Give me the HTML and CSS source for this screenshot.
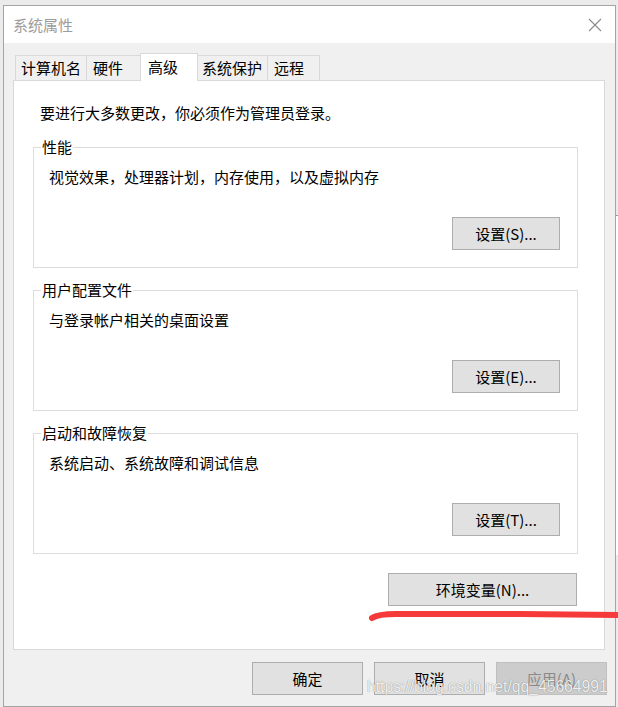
FILE: index.html
```html
<!DOCTYPE html>
<html lang="zh-CN">
<head>
<meta charset="utf-8">
<title>系统属性</title>
<link rel="stylesheet" href="styles.css">
</head>
<body>
<div class="window">
  <div class="titlebar">
    <span class="title">系统属性</span>
    <svg class="close" width="14" height="14" viewBox="0 0 14 14"><path d="M1 1 L13 13 M13 1 L1 13" stroke="#8a8a8a" stroke-width="1.1" fill="none"/></svg>
  </div>
  <div class="tabs">
    <div class="tab tab-w1">计算机名</div>
    <div class="tab tab-w2">硬件</div>
    <div class="tab tab-active">高级</div>
    <div class="tab tab-w4">系统保护</div>
    <div class="tab tab-w5">远程</div>
  </div>
  <div class="panel">
    <p class="intro">要进行大多数更改，你必须作为管理员登录。</p>
    <fieldset class="group">
      <legend>性能</legend>
      <p class="desc">视觉效果，处理器计划，内存使用，以及虚拟内存</p>
      <button class="btn btn-set">设置(S)...</button>
    </fieldset>
    <fieldset class="group">
      <legend>用户配置文件</legend>
      <p class="desc">与登录帐户相关的桌面设置</p>
      <button class="btn btn-set">设置(E)...</button>
    </fieldset>
    <fieldset class="group">
      <legend>启动和故障恢复</legend>
      <p class="desc">系统启动、系统故障和调试信息</p>
      <button class="btn btn-set">设置(T)...</button>
    </fieldset>
    <button class="btn btn-env">环境变量(N)...</button>
  </div>
  <div class="actions">
    <button class="btn btn-action">确定</button>
    <button class="btn btn-action">取消</button>
    <button class="btn btn-action btn-disabled">应用(A)</button>
  </div>
</div>
<div class="behind"></div>
<svg class="mark" width="618" height="707" viewBox="0 0 618 707"><path d="M372 618 Q378 614 396 614 L520 614 L618 615" stroke="#f63a3a" stroke-width="6" stroke-linecap="round" fill="none"/></svg>
<div class="watermark">https://blog.csdn.net/qq_45664991</div>
</body>
</html>
```

FILE: styles.css
```css
* { box-sizing: border-box; }
html, body { margin: 0; padding: 0; }
body {
  width: 618px;
  height: 707px;
  overflow: hidden;
  background: #ebebeb;
  font-family: "Noto Sans CJK SC", "Liberation Sans", sans-serif;
  color: #000;
  display: flex;
  align-items: flex-start;
  position: relative;
}
.window {
  margin: 5px 0 0 3px;
  width: 613px;
  height: 702px;
  border: 1px solid #a4a4a4;
  background: #f0f0f0;
  display: flex;
  flex-direction: column;
  flex: none;
}
.titlebar {
  height: 37px;
  background: #fff;
  display: flex;
  align-items: center;
  justify-content: space-between;
  padding: 0 13px 0 9px;
}
.title {
  font-size: 15px;
  line-height: 20px;
  color: #9c9c9c;
}
.close { display: block; }
.tabs {
  display: flex;
  align-items: flex-end;
  height: 27px;
  margin: 10px 0 0 11px;
}
.tab {
  height: 25px;
  border: 1px solid #d9d9d9;
  border-bottom: none;
  background: #f0f0f0;
  font-size: 15px;
  line-height: 23px;
  padding: 0 0 0 6px;
  margin-left: -1px;
  white-space: nowrap;
}
.tab-w1 { width: 72px; margin-left: 0; padding-left: 5px; }
.tab-w2 { width: 55px; }
.tab-w4 { width: 71px; padding-left: 4px; }
.tab-w5 { width: 53px; }
.tab-active {
  width: 58px;
  height: 28px;
  margin-bottom: -1px;
  background: #fff;
  position: relative;
  z-index: 1;
  line-height: 25px;
  padding-left: 7px;
}
.panel {
  margin-left: 9px;
  width: 592px;
  height: 570px;
  background: #fff;
  border: 1px solid #d9d9d9;
  padding: 22px 26px 0 19px;
  display: flex;
  flex-direction: column;
  flex: none;
}
.intro {
  margin: 0 0 0 7px;
  font-size: 15px;
  line-height: 20px;
}
.group {
  margin: 15px 0 0 0;
  width: 545px;
  min-width: 0;
  border: 1px solid #dcdcdc;
  padding: 0 17px 17px 15px;
  display: flex;
  flex-direction: column;
}
.group + .group { margin-top: 13px; }
.group legend {
  font-size: 15px;
  line-height: 18px;
  padding: 0 1px;
  margin-left: -8px;
}
.desc {
  margin: 11px 0 0 0;
  font-size: 15px;
  line-height: 20px;
}
.btn {
  font-family: "Noto Sans CJK SC", "Liberation Sans", sans-serif;
  font-size: 15px;
  line-height: 20px;
  color: #000;
  background: #e1e1e1;
  border: 1px solid #adadad;
  border-radius: 0;
  padding: 0;
  height: 33px;
  text-align: center;
}
.btn-set {
  width: 108px;
  margin-top: 30px;
  align-self: flex-end;
}
.btn-env {
  width: 189px;
  margin-top: 19px;
  align-self: flex-end;
  margin-right: 1px;
}
.actions {
  display: flex;
  justify-content: flex-end;
  gap: 11px;
  margin-top: 12px;
  padding-right: 8px;
}
.btn-action { width: 111px; }
.btn-disabled {
  background: #cccccc;
  border-color: #bfbfbf;
  color: #8a8a8a;
}
.behind {
  margin-top: 215px;
  width: 2px;
  height: 340px;
  background: #fff;
  border-top: 1px solid #9a9a9a;
  flex: none;
}
.mark {
  position: absolute;
  left: 0;
  top: 0;
  pointer-events: none;
}
.watermark {
  position: absolute;
  left: 367px;
  top: 678px;
  font-family: "Liberation Sans", sans-serif;
  font-size: 15.7px;
  line-height: 18px;
  color: rgba(255, 255, 255, 0.9);
  text-shadow: 0 0 1px rgba(0, 0, 0, 0.35), 0 0 1px rgba(0, 0, 0, 0.2);
  white-space: nowrap;
}
```
